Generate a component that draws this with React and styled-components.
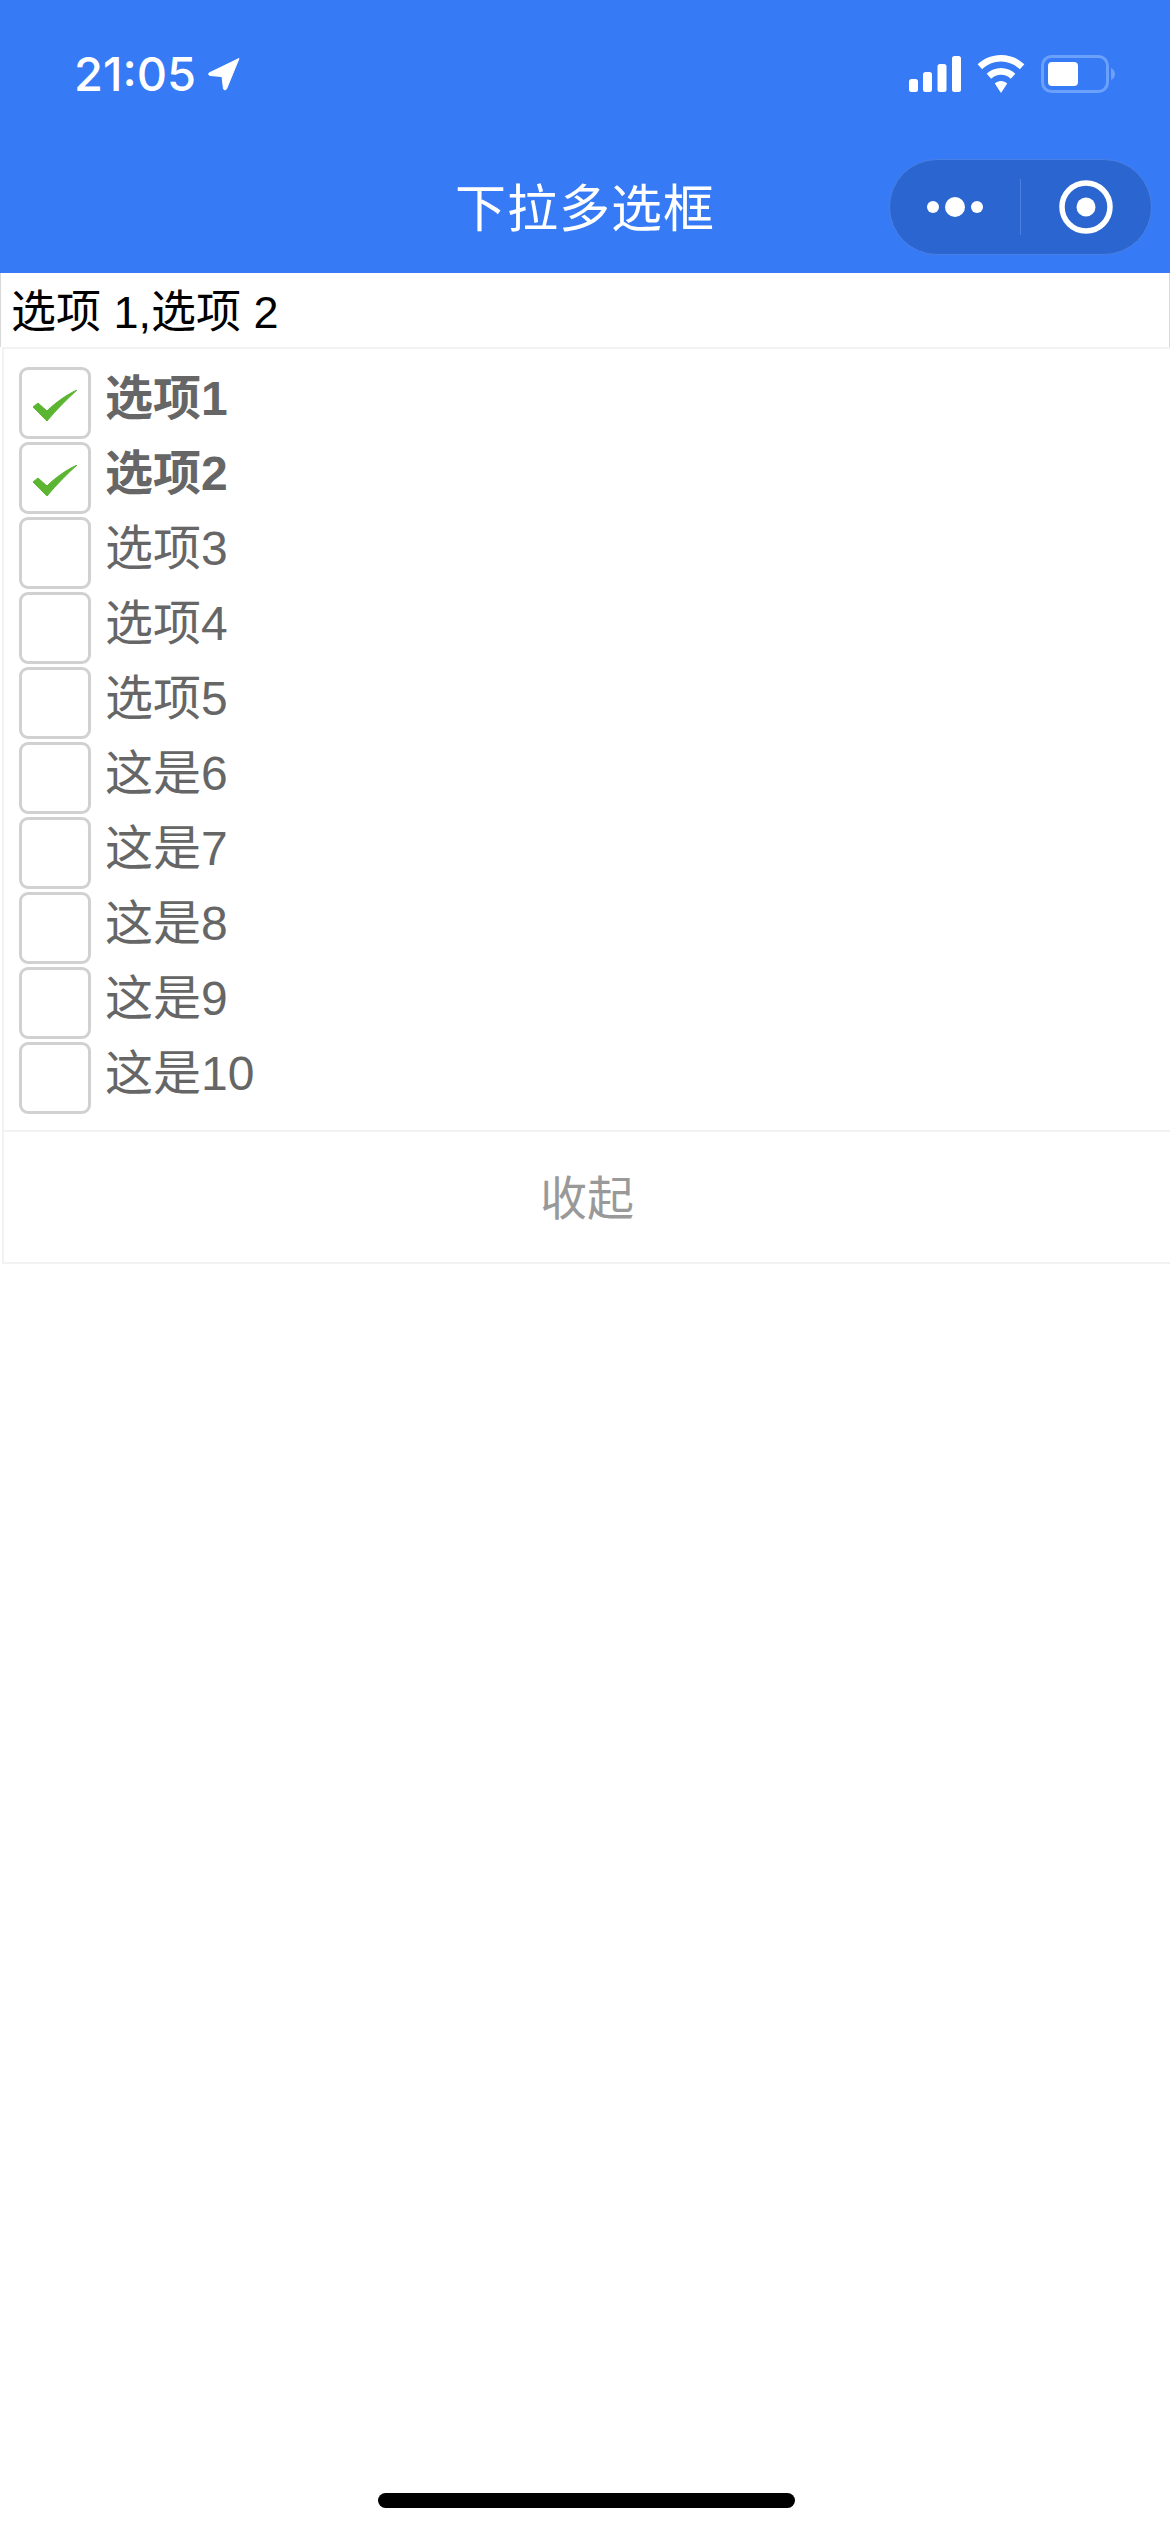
import React from 'react';
import styled, { createGlobalStyle } from 'styled-components';

const GlobalStyle = createGlobalStyle`
  html, body {
    margin: 0;
    padding: 0;
    background: #fff;
  }
  * {
    box-sizing: border-box;
  }
`;

const FONT = `"Liberation Sans", "Noto Sans CJK SC", sans-serif`;

const Page = styled.div`
  width: 1170px;
  height: 2532px;
  display: flex;
  flex-direction: column;
  font-family: ${FONT};
  overflow: hidden;
`;

const Header = styled.header`
  height: 273px;
  background: #367af6;
  color: #fff;
  display: flex;
  flex-direction: column;
`;

const StatusBar = styled.div`
  height: 159px;
  padding: 52px 55px 0 74px;
  display: flex;
  justify-content: space-between;
  align-items: flex-start;
`;

const TimeGroup = styled.div`
  display: flex;
  align-items: center;
  gap: 12px;
`;

const Time = styled.span`
  font-family: Inter, ${FONT};
  font-size: 47px;
  line-height: 44px;
  font-weight: 500;
`;

const StatusIcons = styled.div`
  display: flex;
  align-items: center;
  gap: 16px;
  height: 44px;
`;

const NavBar = styled.div`
  height: 114px;
  padding: 0 18px 0 0;
  display: flex;
  align-items: flex-start;
  justify-content: flex-end;
  position: relative;
`;

const Title = styled.h1`
  position: absolute;
  left: 0;
  right: 0;
  top: 16px;
  margin: 0;
  text-align: center;
  font-size: 51px;
  line-height: 70px;
  font-weight: 400;
  letter-spacing: 1px;
`;

const Capsule = styled.div`
  width: 263px;
  height: 96px;
  border-radius: 48px;
  background: #2b66d0;
  border: 1px solid #4a80e4;
  display: flex;
  align-items: center;
`;

const CapsuleHalf = styled.div`
  flex: 1;
  height: 100%;
  display: flex;
  align-items: center;
  justify-content: center;
`;

const CapsuleDivider = styled.div`
  width: 1px;
  height: 56px;
  background: #4a80e4;
`;

const ValueField = styled.div`
  height: 74px;
  border-left: 1px solid #d8d8d8;
  border-right: 1px solid #d8d8d8;
  padding-left: 10px;
  font-size: 45px;
  line-height: 80px;
  color: #000;
  white-space: pre;
`;

const Dropdown = styled.div`
  margin-left: 2px;
  border: 2px solid #f2f2f2;
  border-right: none;
  height: 917px;
  display: flex;
  flex-direction: column;
`;

const OptionList = styled.ul`
  list-style: none;
  margin: 0;
  padding: 18px 0 0 15px;
  height: 783px;
  border-bottom: 2px solid #f2f2f2;
`;

const OptionRow = styled.li`
  height: 75px;
  display: flex;
  align-items: flex-start;
  gap: 14px;
`;

const CheckBox = styled.span`
  width: 72px;
  height: 72px;
  padding-top: 5px;
  border: 3px solid #d1d1d1;
  border-radius: 9px;
  display: flex;
  align-items: center;
  justify-content: center;
  flex-shrink: 0;
`;

const OptionLabel = styled.span`
  font-size: 48px;
  line-height: 64px;
  color: #666;
  font-weight: ${(props) => (props.$checked ? 700 : 400)};
`;

const CollapseButton = styled.div`
  flex: 1;
  display: flex;
  align-items: center;
  justify-content: center;
  font-size: 47px;
  color: #999;
  padding-bottom: 5px;
`;

const HomeBar = styled.div`
  width: 417px;
  height: 15px;
  border-radius: 8px;
  background: #000;
  margin: auto auto 24px 378px;
`;

const options = [
  { label: '选项1', checked: true },
  { label: '选项2', checked: true },
  { label: '选项3' },
  { label: '选项4' },
  { label: '选项5' },
  { label: '这是6' },
  { label: '这是7' },
  { label: '这是8' },
  { label: '这是9' },
  { label: '这是10' },
];

const LocationArrow = () => (
  <svg width="32" height="34" viewBox="0 0 32 34">
    <path d="M31 1.5 L1 16 Q0 18 2 18.5 L14 19.5 L15.5 32 Q17 34 18.5 32 Z" fill="#fff" stroke="#fff" strokeWidth="1" strokeLinejoin="round" />
  </svg>
);

const SignalIcon = () => (
  <svg width="52" height="36" viewBox="0 0 52 36">
    <rect x="0" y="23" width="9" height="13" rx="2.5" fill="#fff" />
    <rect x="14" y="16" width="9" height="20" rx="2.5" fill="#fff" />
    <rect x="28.5" y="8" width="9" height="28" rx="2.5" fill="#fff" />
    <rect x="43" y="0" width="9" height="36" rx="2.5" fill="#fff" />
  </svg>
);

const WifiIcon = () => (
  <svg width="48" height="38" viewBox="0 0 44 35">
    <path d="M22 0 C13.5 0 6 3.2 0.5 8.6 L4.6 13.2 C9.2 8.8 15.2 6 22 6 C28.8 6 34.8 8.8 39.4 13.2 L43.5 8.6 C38 3.2 30.5 0 22 0 Z" fill="#fff" />
    <path d="M22 12 C17 12 12.4 14 8.8 17.3 L13 21.9 C15.4 19.7 18.5 18.3 22 18.3 C25.5 18.3 28.6 19.7 31 21.9 L35.2 17.3 C31.6 14 27 12 22 12 Z" fill="#fff" />
    <path d="M22 24 C19.8 24 17.8 24.9 16.3 26.3 L22 35 L27.7 26.3 C26.2 24.9 24.2 24 22 24 Z" fill="#fff" />
  </svg>
);

const BatteryIcon = () => (
  <svg width="74" height="38" viewBox="0 0 74 38">
    <rect x="1.5" y="1.5" width="65" height="35" rx="9" fill="none" stroke="#6ba1fa" strokeWidth="3" />
    <rect x="7" y="7" width="30" height="24" rx="4" fill="#fff" />
    <path d="M70 13 Q74 15 74 19 Q74 23 70 25 Z" fill="#6ba1fa" />
  </svg>
);

const MoreIcon = () => (
  <svg width="56" height="22" viewBox="0 0 56 22">
    <circle cx="6" cy="11" r="6" fill="#fff" />
    <circle cx="28" cy="11" r="10" fill="#fff" />
    <circle cx="50" cy="11" r="6" fill="#fff" />
  </svg>
);

const CloseIcon = () => (
  <svg width="54" height="54" viewBox="0 0 54 54">
    <circle cx="27" cy="27" r="24" fill="none" stroke="#fff" strokeWidth="5.5" />
    <circle cx="27" cy="27" r="9.5" fill="#fff" />
  </svg>
);

const CheckMark = () => (
  <svg width="44" height="32" viewBox="0 0 44 32">
    <path d="M0 17 L5 13 L14 21 C22 13 33 5 44 0 C34 9 24 19 14 31 Z" fill="#5cb531" stroke="#5cb531" strokeWidth="1" strokeLinejoin="round" />
  </svg>
);

const App = () => (
  <Page>
    <GlobalStyle />
    <Header>
      <StatusBar>
        <TimeGroup>
          <Time>21:05</Time>
          <LocationArrow />
        </TimeGroup>
        <StatusIcons>
          <SignalIcon />
          <WifiIcon />
          <BatteryIcon />
        </StatusIcons>
      </StatusBar>
      <NavBar>
        <Title>下拉多选框</Title>
        <Capsule>
          <CapsuleHalf>
            <MoreIcon />
          </CapsuleHalf>
          <CapsuleDivider />
          <CapsuleHalf>
            <CloseIcon />
          </CapsuleHalf>
        </Capsule>
      </NavBar>
    </Header>
    <ValueField>选项 1,选项 2</ValueField>
    <Dropdown>
      <OptionList>
        {options.map((option) => (
          <OptionRow key={option.label}>
            <CheckBox>{option.checked && <CheckMark />}</CheckBox>
            <OptionLabel $checked={option.checked}>{option.label}</OptionLabel>
          </OptionRow>
        ))}
      </OptionList>
      <CollapseButton>收起</CollapseButton>
    </Dropdown>
    <HomeBar />
  </Page>
);

export default App;
